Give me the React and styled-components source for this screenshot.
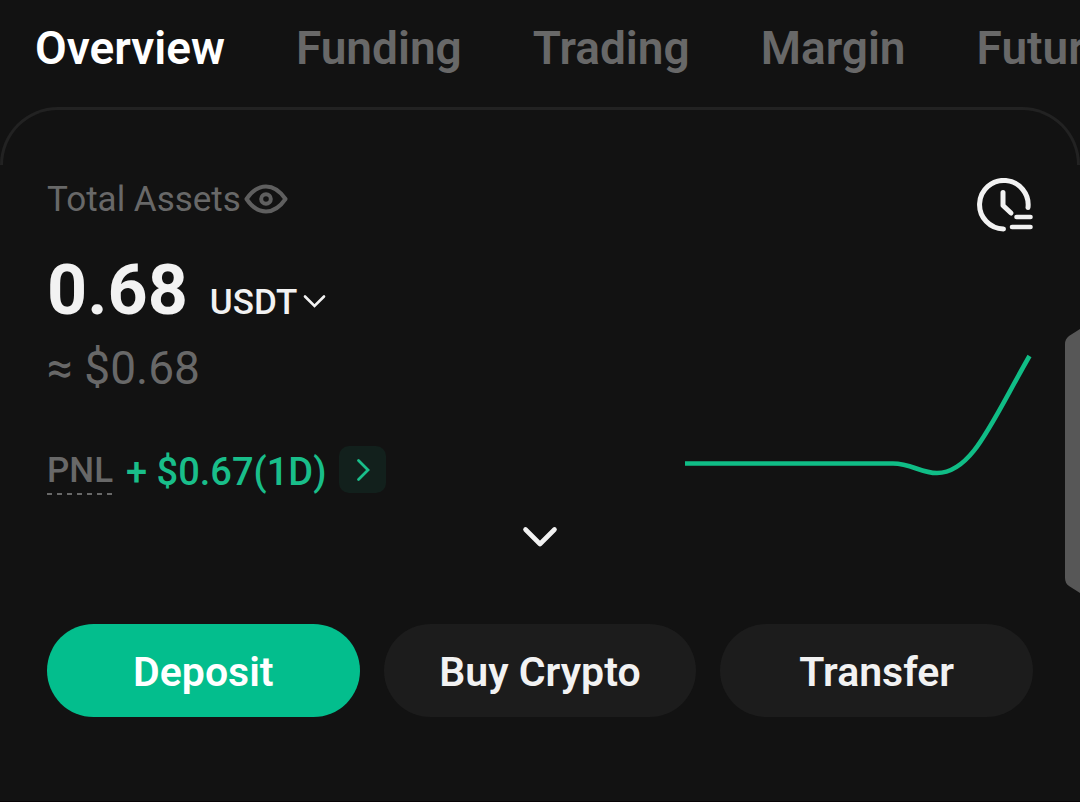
import React, { useState } from "react";
import styled, { createGlobalStyle } from "styled-components";

const tabs = ["Overview", "Funding", "Trading", "Margin", "Futures"];

function App() {
  const [activeTab, setActiveTab] = useState("Overview");

  return (
    <Page>
      <GlobalStyle />
      <Tabs>
        {tabs.map((tab) => (
          <Tab
            key={tab}
            type="button"
            $active={tab === activeTab}
            onClick={() => setActiveTab(tab)}
          >
            {tab}
          </Tab>
        ))}
      </Tabs>
      <PanelEdge />
      <Content>
        <Assets>
          <Summary>
            <Label>
              Total Assets
              <IconButton type="button" aria-label="Hide balance">
                <EyeIcon />
              </IconButton>
            </Label>
            <Amount>
              <strong>0.68</strong>
              <Currency>
                <select aria-label="Currency" defaultValue="USDT">
                  <option>USDT</option>
                </select>
                <SmallChevron />
              </Currency>
            </Amount>
            <Converted>≈ $0.68</Converted>
            <Pnl>
              <span className="name">PNL</span>
              <span className="value">+ $0.67(1D)</span>
              <PnlButton type="button" aria-label="PNL details">
                <svg width="47" height="47" viewBox="0 0 47 47">
                  <path d="M19.5 14.5 L29 24 L19.5 33.5" />
                </svg>
              </PnlButton>
            </Pnl>
          </Summary>
          <Side>
            <IconButton type="button" aria-label="History">
              <HistoryIcon />
            </IconButton>
            <Chart />
          </Side>
        </Assets>
        <Expand type="button" aria-label="Expand">
          <svg width="36" height="24" viewBox="0 0 36 24">
            <path d="M3.5 4.5 L18 19 L32.5 4.5" />
          </svg>
        </Expand>
        <Actions>
          <Action type="button" $primary>
            Deposit
          </Action>
          <Action type="button">Buy Crypto</Action>
          <Action type="button">Transfer</Action>
        </Actions>
      </Content>
      <Handle width="15" height="264" viewBox="0 0 15 264">
        <path d="M15 0 L4 7 Q0 10 0 15 V249 Q0 254 4 257 L15 264 Z" />
      </Handle>
    </Page>
  );
}

function EyeIcon() {
  return (
    <svg width="44" height="32" viewBox="0 0 44 32" fill="none" stroke="#5f5f5f" strokeWidth="4">
      <path
        d="M2.5 15 C8 7 14.5 2.5 22 2.5 C29.5 2.5 36 7 41.5 15 C36 23 29.5 27.500 22 27.500 C14.5 27.500 8 23 2.5 15 Z"
        strokeLinejoin="round"
      />
      <circle cx="22" cy="15" r="4.800" />
    </svg>
  );
}

function SmallChevron() {
  return (
    <svg width="24" height="20" viewBox="0 0 24 20" fill="none" stroke="#f2f2f2" strokeWidth="2.6">
      <path d="M2 3.500 L11.500 13 L21 3.500" strokeLinecap="round" />
    </svg>
  );
}

function HistoryIcon() {
  return (
    <svg
      width="57"
      height="58"
      viewBox="0 0 57 58"
      fill="none"
      stroke="#f2f2f2"
      strokeWidth="5"
      strokeLinecap="round"
      strokeLinejoin="round"
    >
      <path d="M27.500 51 A24.300 24.300 0 1 1 52 29.500" />
      <path d="M27 14.500 V27.500 L35 35" />
      <path d="M40.500 39 H54.500 M36 49 H54.500" strokeWidth="4.600" />
    </svg>
  );
}

function Chart() {
  return (
    <svg width="348" height="145" viewBox="0 0 348 145" fill="none" stroke="#10bd86" strokeWidth="4.6">
      <path d="M0 111.500 H208 C226 111.500 236 121 252 121 C287 121 306 71 344.500 4" />
    </svg>
  );
}

const GlobalStyle = createGlobalStyle`
  * {
    box-sizing: border-box;
  }

  body {
    margin: 0;
    background: #121212;
    font-family: Roboto, "Liberation Sans", sans-serif;
  }

  button,
  select {
    margin: 0;
    padding: 0;
    border: none;
    background: none;
    font-family: inherit;
    cursor: pointer;
  }

  svg {
    display: block;
    flex-shrink: 0;
  }
`;

const Page = styled.main`
  position: relative;
  min-height: 100vh;
  overflow: hidden;
  border-bottom: 1px solid #080305;
`;

const Tabs = styled.nav`
  display: flex;
  gap: 71px;
  padding: 20px 0 31px 35px;
  overflow: hidden;
`;

const Tab = styled.button`
  flex-shrink: 0;
  color: ${({ $active }) => ($active ? "#ffffff" : "#686868")};
  font-size: 46px;
  font-weight: 600;
  line-height: 56px;
`;

/* only the rounded top of the panel is outlined */
const PanelEdge = styled.div`
  height: 58px;
  border: 3px solid #222222;
  border-bottom: none;
  border-radius: 58px 58px 0 0;
`;

const Content = styled.section`
  padding: 13px 47px 84px;
`;

const Assets = styled.div`
  display: flex;
  justify-content: space-between;
`;

const Summary = styled.div`
  display: flex;
  flex-direction: column;
`;

const Label = styled.div`
  display: flex;
  align-items: center;
  gap: 3px;
  color: #686868;
  font-size: 35px;
  line-height: 44px;
`;

const IconButton = styled.button`
  display: block;
`;

const Amount = styled.div`
  display: flex;
  align-items: baseline;
  gap: 22px;
  margin-top: 26px;
  color: #f2f2f2;

  strong {
    font-size: 70px;
    font-weight: 700;
    line-height: 84px;
  }
`;

const Currency = styled.div`
  display: flex;
  align-items: center;
  gap: 5px;

  select {
    appearance: none;
    color: inherit;
    font-size: 35px;
    font-weight: 500;
    line-height: 42px;
  }
`;

const Converted = styled.div`
  margin-top: 8px;
  color: #686868;
  font-size: 46px;
  line-height: 56px;
`;

const Pnl = styled.div`
  display: flex;
  align-items: flex-start;
  margin-top: 50px;
  font-weight: 500;

  .name {
    height: 49px;
    color: #686868;
    font-size: 35px;
    line-height: 49px;
    background: repeating-linear-gradient(90deg, #686868 0 5px, transparent 5px 10px) bottom / 100% 2px
      no-repeat;
  }

  .value {
    margin: 0 13px;
    padding-top: 1px;
    color: #19be8a;
    font-size: 38px;
    line-height: 50px;
  }
`;

const PnlButton = styled.button`
  border-radius: 10px;
  background: #12201c;

  path {
    fill: none;
    stroke: #19be8a;
    stroke-width: 2.8;
    stroke-linecap: round;
  }
`;

const Side = styled.div`
  display: flex;
  flex-direction: column;
  align-items: flex-end;
  justify-content: space-between;
`;

const Expand = styled.button`
  display: block;
  margin: 28px auto 0;

  path {
    fill: none;
    stroke: #f2f2f2;
    stroke-width: 4.6;
    stroke-linecap: round;
    stroke-linejoin: round;
  }
`;

const Actions = styled.div`
  display: grid;
  grid-template-columns: repeat(3, 1fr);
  gap: 24px;
  margin-top: 75px;
`;

const Action = styled.button`
  height: 93px;
  padding-top: 2px;
  border-radius: 47px;
  color: ${({ $primary }) => ($primary ? "#ffffff" : "#f2f2f2")};
  background: ${({ $primary }) => ($primary ? "#03be8d" : "#1c1c1c")};
  font-size: 41px;
  font-weight: 600;
`;

const Handle = styled.svg`
  position: absolute;
  top: 329px;
  right: 0;
  fill: #575757;
`;

export default App;
